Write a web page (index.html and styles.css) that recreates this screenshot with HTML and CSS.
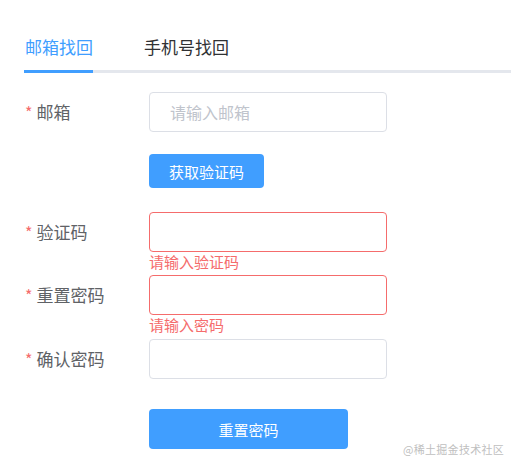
FILE: index.html
```html
<!DOCTYPE html>
<html lang="zh-CN">
<head>
<meta charset="utf-8">
<title>找回密码</title>
<link rel="stylesheet" href="styles.css">
</head>
<body>
<div class="page">
  <div class="tabs">
    <div class="tab active">邮箱找回</div>
    <div class="tab">手机号找回</div>
  </div>
  <form class="form">
    <div class="row r1">
      <label class="label"><span class="star">*</span>邮箱</label>
      <div class="control"><input class="input" placeholder="请输入邮箱"></div>
    </div>
    <div class="row r2">
      <div class="label"></div>
      <div class="control"><button type="button" class="btn small">获取验证码</button></div>
    </div>
    <div class="row r3">
      <label class="label"><span class="star">*</span>验证码</label>
      <div class="control"><input class="input error"><div class="err">请输入验证码</div></div>
    </div>
    <div class="row r4">
      <label class="label"><span class="star">*</span>重置密码</label>
      <div class="control"><input class="input error" type="password"><div class="err">请输入密码</div></div>
    </div>
    <div class="row r5">
      <label class="label"><span class="star">*</span>确认密码</label>
      <div class="control"><input class="input" type="password"></div>
    </div>
    <div class="row r6">
      <div class="label"></div>
      <div class="control"><button type="button" class="btn wide">重置密码</button></div>
    </div>
  </form>
  <div class="watermark">@稀土掘金技术社区</div>
</div>
</body>
</html>
```
FILE: styles.css
```css
* { box-sizing: border-box; }
html, body { margin: 0; padding: 0; background: #fff; }
body {
  font-family: "Noto Sans CJK SC", "Noto Sans", sans-serif;
  width: 511px;
  height: 467px;
  overflow: hidden;
}
.page {
  position: relative;
  padding-left: 24px;
  height: 467px;
}
.tabs {
  display: flex;
  border-bottom: 3px solid #e4e7ed;
}
.tab {
  font-size: 17px;
  line-height: 40px;
  padding: 27px 0 3px;
  color: #303133;
  margin-right: 51px;
}
.tab.active {
  color: #409eff;
  border-bottom: 3px solid #409eff;
  margin-bottom: -3px;
  padding-left: 1px;
}
.form {
  display: flex;
  flex-direction: column;
  padding-top: 19px;
}
.row {
  display: grid;
  grid-template-columns: 125px 238px;
}
.r2 { margin-top: 22px; }
.r2 .label { height: 34px; }
.r3 { margin-top: 24px; }
.r4 { margin-top: 3px; }
.r5 { margin-top: 4px; }
.r6 { margin-top: 30px; }
.label {
  font-size: 17px;
  line-height: 40px;
  height: 40px;
  color: #606266;
  padding-left: 1px;
}
.star {
  color: #f56c6c;
  margin-right: 4px;
  font-size: 16px;
}
.control { display: flex; flex-direction: column; align-items: flex-start; }
.input {
  width: 238px;
  height: 40px;
  border: 1px solid #dcdfe6;
  border-radius: 4px;
  padding: 0 20px;
  font-size: 16px;
  font-family: inherit;
  color: #606266;
  outline: none;
  background: #fff;
}
.input::placeholder { color: #c0c4cc; }
.input.error { border-color: #f56c6c; }
.err {
  color: #f56c6c;
  font-size: 15px;
  line-height: 20px;
  height: 20px;
}
.btn {
  border: none;
  background: #409eff;
  color: #fff;
  font-family: inherit;
  font-size: 15px;
  border-radius: 4px;
  padding: 0;
  cursor: pointer;
}
.btn.small { width: 115px; height: 34px; }
.btn.wide { width: 199px; height: 40px; }
.watermark {
  position: absolute;
  left: 403px;
  top: 441px;
  font-size: 11px;
  line-height: 16px;
  color: #c0c0c0;
  letter-spacing: 0.3px;
}
```
